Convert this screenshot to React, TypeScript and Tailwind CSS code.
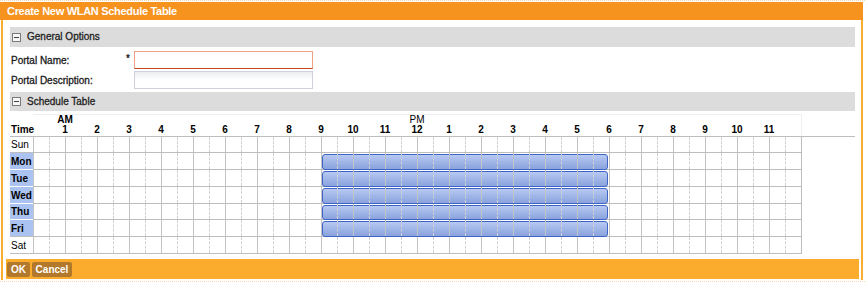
import React from "react";

const hourLabels = [
  { t: "1", top: "AM" },
  { t: "2" }, { t: "3" }, { t: "4" }, { t: "5" }, { t: "6" }, { t: "7" }, { t: "8" },
  { t: "9" }, { t: "10" }, { t: "11" },
  { t: "12", top: "PM" },
  { t: "1" }, { t: "2" }, { t: "3" }, { t: "4" }, { t: "5" }, { t: "6" }, { t: "7" },
  { t: "8" }, { t: "9" }, { t: "10" }, { t: "11" },
];

type Day = {
  n: string;
  on: boolean;
  row: string;
  bar: string;
  labelBorder: string;
};

const days: Day[] = [
  { n: "Sun", on: false, row: "h-[16px]", bar: "", labelBorder: "border-[#bdbdbd]" },
  { n: "Mon", on: true, row: "h-[17px]", bar: "h-[16px]", labelBorder: "border-white" },
  { n: "Tue", on: true, row: "h-[17px]", bar: "h-[16px]", labelBorder: "border-white" },
  { n: "Wed", on: true, row: "h-[17px]", bar: "h-[16px]", labelBorder: "border-white" },
  { n: "Thu", on: true, row: "h-[16px]", bar: "h-[15px]", labelBorder: "border-white" },
  { n: "Fri", on: true, row: "h-[17px]", bar: "h-[16px]", labelBorder: "border-[#bdbdbd]" },
  { n: "Sat", on: false, row: "h-[17px]", bar: "", labelBorder: "border-[#bdbdbd]" },
];

const cells = Array.from({ length: 48 }, (_, i) => i);

function SectionHeader({ title }: { title: string }) {
  return (
    <div className="flex items-center h-full bg-[#dcdcdc]">
      <div className="ml-[2px] w-[9px] h-[9px] border border-[#7a7a7a] bg-[#f6f6f6] flex items-center justify-center">
        <div className="w-[5px] h-[1px] bg-[#444]" />
      </div>
      <span className="ml-[6px] text-[10px] leading-[12px] text-[#1e1e1e] [-webkit-text-stroke:0.3px_#1e1e1e]">
        {title}
      </span>
    </div>
  );
}

export default function App() {
  return (
    <div
      className="w-[865px] h-[283px] bg-white overflow-hidden border-t border-dotted border-[#f8d6aa] pt-[1px]"
      style={{ fontFamily: '"Liberation Sans", Arial, sans-serif' }}
    >
      {/* Title bar */}
      <div className="w-[863px] h-[18px] bg-[#f6921e] flex items-center pl-[7px]">
        <span className="text-white font-bold text-[11px] leading-[12px] tracking-[-0.3px]">
          Create New WLAN Schedule Table
        </span>
      </div>

      {/* Body */}
      <div className="ml-[1px] w-[862px] border-l-2 border-r-2 border-[#fcad2f] pl-[7px] pr-[6px] pt-[7px] pb-[1px]">
        <div className="h-[20px]">
          <SectionHeader title="General Options" />
        </div>

        {/* Portal Name */}
        <div className="mt-[4px] flex items-center h-[18px] text-[10px] text-[#1a1a1a]">
          <div className="w-[116px] pl-[1px] [-webkit-text-stroke:0.3px_#1a1a1a]">Portal Name:</div>
          <div className="w-[8px] self-start pt-[3px] leading-[10px] font-bold">*</div>
          <div className="w-[179px] h-[18px] border border-[#eea183] border-b-[#c8481d] bg-white" />
        </div>

        {/* Portal Description */}
        <div className="mt-[2px] flex items-center h-[18px] text-[10px] text-[#1a1a1a]">
          <div className="w-[124px] pl-[1px] [-webkit-text-stroke:0.3px_#1a1a1a]">Portal Description:</div>
          <div className="w-[179px] h-[18px] border border-[#cfd0dc] bg-linear-to-b from-[#eceef0] via-white to-white" />
        </div>

        <div className="mt-[3px] h-[19px]">
          <SectionHeader title="Schedule Table" />
        </div>

        {/* Schedule grid */}
        <div className="mt-[3px] text-[10px] text-black">
          {/* Header row */}
          <div className="flex h-[23px] border-b border-[#bdbdbd]">
            <div className="w-[23px] flex items-end pb-[1px] pl-[1px] font-bold leading-[10px]">Time</div>
            <div className="flex items-end pb-[1px] w-[769px] border-t border-r border-[#efefef]">
              <div className="w-[16px]" />
              {hourLabels.map((h, i) => (
                <div key={i} className="w-[32px] flex flex-col items-center leading-[10px]">
                  <span className={h.top === "AM" ? "font-bold h-[10px]" : "h-[10px]"}>{h.top ?? ""}</span>
                  <span className="font-bold">{h.t}</span>
                </div>
              ))}
              <div className="w-[16px]" />
            </div>
          </div>

          {/* Day rows */}
          {days.map((d) => (
            <div key={d.n} className={`flex ${d.row}`}>
              <div
                className={`w-[23px] flex items-center pl-[1px] border-b ${d.labelBorder} ${
                  d.on ? "bg-[#abc3f0] font-bold" : "bg-white"
                }`}
              >
                {d.n}
              </div>
              <div className="relative flex w-[769px] border-b border-r border-[#bdbdbd]">
                {d.on && (
                  <div
                    className={`absolute left-[289px] top-[1px] w-[286px] ${d.bar} rounded-[3px] border border-[#3d64c6] bg-linear-to-b from-[#b7c9f2] to-[#8aa3dd]`}
                  />
                )}
                {cells.map((c) => (
                  <div
                    key={c}
                    className={
                      c % 2 === 0
                        ? "relative w-[16px] h-full border-l border-solid border-[#c4c4c4]"
                        : "relative w-[16px] h-full border-l border-dashed border-[#d0d0d0]"
                    }
                  />
                ))}
              </div>
            </div>
          ))}
        </div>

        {/* Footer */}
        <div className="mt-[5px] -ml-[4px] -mr-[4px] h-[20px] bg-[#fcac2c] flex items-center pl-[1px] gap-[2px]">
          <div className="w-[23px] h-[15px] rounded-[2px] bg-[#b2792c] text-white font-bold text-[10px] leading-[15px] text-center">
            OK
          </div>
          <div className="w-[40px] h-[15px] rounded-[2px] bg-[#b2792c] text-white font-bold text-[10px] leading-[15px] text-center">
            Cancel
          </div>
        </div>
      </div>

      <div className="mt-[1px] w-[865px] border-t border-dotted border-[#f8d6aa]" />
    </div>
  );
}
